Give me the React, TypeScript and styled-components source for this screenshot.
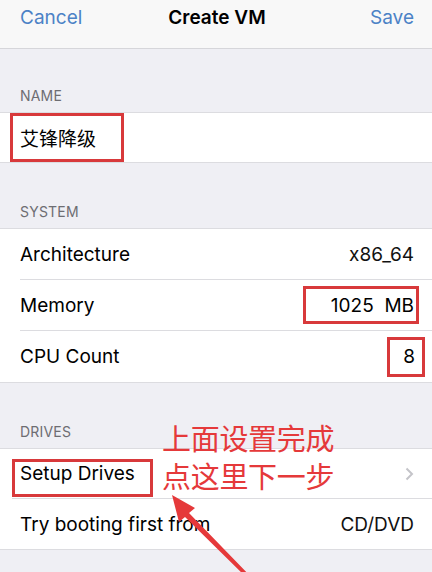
import React from 'react';
import styled, { createGlobalStyle } from 'styled-components';

const Global = createGlobalStyle`
  html, body { margin: 0; padding: 0; background: #efeff4; }
  body { font-family: Inter, "Noto Sans CJK SC", sans-serif; color: #000; }
`

const Screen = styled.div`
  position: relative;
  width: 432px;
  height: 572px;
  overflow: hidden;
  background: #efeff4;
`
const NavBar = styled.header`
  height: 49px;
  display: grid;
  grid-template-columns: 1fr auto 1fr;
  align-items: center;
  padding: 0 18px 14px 20px;
  box-sizing: border-box;
  background: #f8f8f8;
  border-bottom: 1px solid #d6d6da;
`
const NavButton = styled.span<{ $right?: boolean }>`
  font-size: 19px;
  color: #4c82c6;
  justify-self: ${(p) => (p.$right ? 'end' : 'start')};
`
const Title = styled.h1`
  margin: 0;
  font-size: 19px;
  font-weight: 600;
`
const GroupHeader = styled.div<{ $h: number }>`
  height: ${(p) => p.$h}px;
  display: flex;
  align-items: flex-end;
  padding: 0 20px 8px;
  box-sizing: border-box;
  font-size: 14px;
  color: #6d6d72;
  letter-spacing: 0.2px;
`
const Section = styled.section`
  background: #fff;
  border-top: 1px solid #dcdce0;
  border-bottom: 1px solid #dcdce0;
`
const Row = styled.div<{ $h?: number; $last?: boolean; $inset?: number }>`
  height: ${(p) => p.$h ?? 51}px;
  display: flex;
  align-items: center;
  justify-content: space-between;
  margin-left: ${(p) => p.$inset ?? 20}px;
  padding-right: 18px;
  box-sizing: border-box;
  font-size: 19px;
  border-bottom: ${(p) => (p.$last ? 'none' : '1px solid #dcdce0')};
`
const Value = styled.span`
  color: #111;
`
const Mark = styled.span<{ $w: number; $h: number; $mr?: number }>`
  display: inline-flex;
  align-items: center;
  box-sizing: border-box;
  width: ${(p) => p.$w}px;
  height: ${(p) => p.$h}px;
  border: 3px solid #d8393b;
  margin-right: ${(p) => p.$mr ?? 0}px;
`
const NameText = styled.span`
  font-family: "Noto Sans CJK SC", sans-serif;
  font-size: 19px;
  padding-left: 7px;
`
const RightMark = styled(Mark)`
  justify-content: flex-end;
  padding-right: 2px;
`
const DriveMark = styled(Mark)`
  align-self: flex-start;
  align-items: flex-start;
  margin-top: 10px;
  padding-left: 5px;
  line-height: 24px;
`
const Chevron = styled.svg`
  width: 9px;
  height: 14px;
`
const Note = styled.div`
  position: absolute;
  left: 162px;
  top: 418px;
  font-family: "Noto Sans CJK SC", sans-serif;
  font-size: 29px;
  line-height: 38px;
  color: #e5393a;
  letter-spacing: -0.3px;
`
const Arrow = styled.svg`
  position: absolute;
  left: 160px;
  top: 491px;
`

export default function App() {
  return (
    <Screen>
      <Global />
      <NavBar>
        <NavButton>Cancel</NavButton>
        <Title>Create VM</Title>
        <NavButton $right>Save</NavButton>
      </NavBar>

      <GroupHeader $h={63}>NAME</GroupHeader>
      <Section>
        <Row $h={49} $last $inset={10}>
          <Mark $w={114} $h={49}>
            <NameText>艾锋降级</NameText>
          </Mark>
        </Row>
      </Section>

      <GroupHeader $h={65}>SYSTEM</GroupHeader>
      <Section>
        <Row>
          Architecture
          <Value>x86_64</Value>
        </Row>
        <Row>
          Memory
          <RightMark $w={116} $h={38} $mr={-5}>
            1025&nbsp;&nbsp;MB
          </RightMark>
        </Row>
        <Row $last>
          CPU Count
          <RightMark $w={38} $h={40} $mr={-11}>
            <span style={{ paddingRight: 5 }}>8</span>
          </RightMark>
        </Row>
      </Section>

      <GroupHeader $h={65}>DRIVES</GroupHeader>
      <Section>
        <Row $h={50} $inset={12}>
          <DriveMark $w={141} $h={38}>Setup Drives</DriveMark>
          <Chevron viewBox="0 0 9 14">
            <path d="M1.5 1.5 L7 7 L1.5 12.5" fill="none" stroke="#c4c4c9" strokeWidth="2" />
          </Chevron>
        </Row>
        <Row $h={50} $last>
          Try booting first from
          <Value>CD/DVD</Value>
        </Row>
      </Section>

      <Note>
        上面设置完成
        <br />
        点这里下一步
      </Note>
      <Arrow width="110" height="90" viewBox="0 0 110 90">
        <path d="M12 4 L35 17 L29 22 L95 90 L90 90 L25 26 L19 31 Z" fill="#e5393a" />
      </Arrow>
    </Screen>
  );
}
